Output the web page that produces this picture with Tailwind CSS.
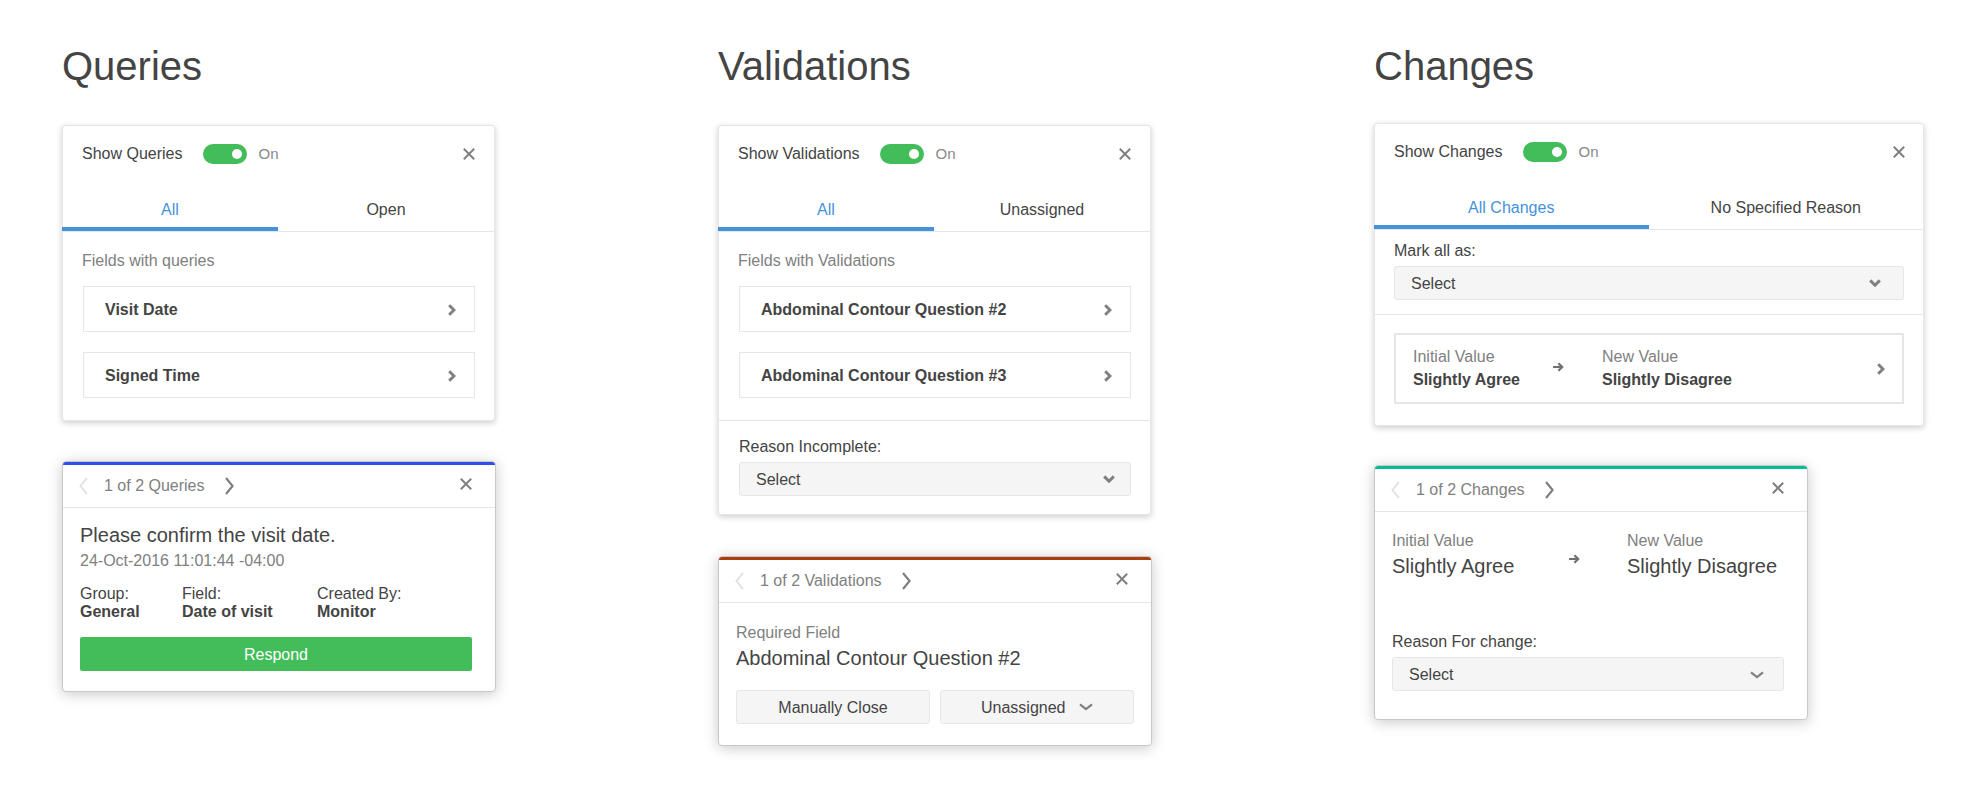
<!DOCTYPE html>
<html lang="en">
<head>
<meta charset="utf-8">
<title>Queries, Validations, Changes</title>
<script src="https://cdn.jsdelivr.net/npm/@tailwindcss/browser@4"></script>
</head>
<body class="bg-white font-['Liberation_Sans',Arial,sans-serif] text-base leading-6 text-[#444444]">
<svg class="hidden" aria-hidden="true">
  <symbol id="close" viewBox="0 0 12 12"><path d="M.8 .8 11.2 11.2M11.2 .8 .8 11.2" fill="none" stroke="currentColor" stroke-width="2" stroke-linecap="butt"/></symbol>
  <symbol id="next" viewBox="0 0 8 12"><path d="M1.2 1.2 6 6 1.2 10.8" fill="none" stroke="currentColor" stroke-width="3"/></symbol>
  <symbol id="down" viewBox="0 0 12 8"><path d="M1.2 1.4 6 6.2 10.8 1.4" fill="none" stroke="currentColor" stroke-width="3"/></symbol>
  <symbol id="down-thin" viewBox="0 0 14 8"><path d="M1 1.4 7 6.2 13 1.4" fill="none" stroke="currentColor" stroke-width="2.2"/></symbol>
  <symbol id="page-prev" viewBox="0 0 9 18"><path d="M8 1 1.4 9 8 17" fill="none" stroke="currentColor" stroke-width="2"/></symbol>
  <symbol id="page-next" viewBox="0 0 9 18"><path d="M1 1 7.6 9 1 17" fill="none" stroke="currentColor" stroke-width="2.2"/></symbol>
  <symbol id="arrow" viewBox="0 0 11 10"><path d="M0 5H9M5.4 1.2 9.2 5 5.4 8.8" fill="none" stroke="currentColor" stroke-width="2.2"/></symbol>
</svg>

<main class="grid grid-cols-3 gap-[106px] px-[62px] pt-[42px] pb-10">

  <section>
    <h2 class="text-[40px] leading-[48px]">Queries</h2>

    <div class="mt-[35px] w-full max-w-[433px] rounded-[3px] border border-[#e6e6e6] bg-white shadow-[0_2px_6px_rgba(0,0,0,0.2)]">
      <div class="flex h-[54px] items-center pt-px pr-[19px] pl-[19px]">
        <label for="show-queries">Show Queries</label>
        <input id="show-queries" type="checkbox" checked class="ml-5 flex h-5 w-11 appearance-none items-center justify-end rounded-full bg-[#43bd5a] pr-[5px] before:size-[10px] before:rounded-full before:bg-white before:content-['']">
        <span class="ml-3 text-[15px] text-[#888888]">On</span>
        <button class="ml-auto text-[#808080]" aria-label="Close"><svg class="size-3"><use href="#close"/></svg></button>
      </div>
      <div class="flex border-b border-[#e6e6e6]" role="tablist">
        <button role="tab" aria-selected="true" class="-ml-px flex h-[51px] flex-1 items-start justify-center border-b-4 border-[#4592db] pt-[18px] text-[#4592db]">All</button>
        <button role="tab" aria-selected="false" class="flex h-[51px] flex-1 items-start justify-center pt-[18px]">Open</button>
      </div>
      <div class="pt-[17px] pr-[19px] pb-[22px] pl-5">
        <h3 class="-ml-px text-[#808080]">Fields with queries</h3>
        <ul class="mt-[13px] flex flex-col gap-5">
          <li><button class="flex h-[46px] w-full items-center justify-between border border-[#e6e6e6] pt-px pr-[18px] pl-[21px] font-bold">Visit Date<svg class="h-3 w-2 text-[#808080]"><use href="#next"/></svg></button></li>
          <li><button class="flex h-[46px] w-full items-center justify-between border border-[#e6e6e6] pt-px pr-[18px] pl-[21px] font-bold">Signed Time<svg class="h-3 w-2 text-[#808080]"><use href="#next"/></svg></button></li>
        </ul>
      </div>
    </div>

    <div class="mt-10 w-full max-w-[434px] overflow-hidden rounded-[4px] border border-[#c8c8c8] bg-white shadow-[0_2px_14px_rgba(0,0,0,0.22)]">
      <div class="h-[3px] bg-[#2f4de8]"></div>
      <div class="flex h-[43px] items-center border-b border-[#e6e6e6] pr-[23px] pl-4 text-[#808080]">
        <button class="text-[#e4e4e4]" aria-label="Previous" disabled><svg class="h-[18px] w-[9px]"><use href="#page-prev"/></svg></button>
        <span class="mr-5 ml-4">1 of 2 Queries</span>
        <button aria-label="Next"><svg class="h-[18px] w-[9px]"><use href="#page-next"/></svg></button>
        <button class="mb-[5px] ml-auto" aria-label="Close"><svg class="size-3"><use href="#close"/></svg></button>
      </div>
      <div class="pt-[15px] pr-[23px] pb-5 pl-[17px]">
        <p class="text-xl leading-6">Please confirm the visit date.</p>
        <p class="mt-0.5 text-[#808080]">24-Oct-2016 11:01:44 -04:00</p>
        <dl class="mt-3 grid grid-cols-[102px_135px_1fr] leading-[18px]">
          <div><dt>Group:</dt><dd class="font-bold">General</dd></div>
          <div><dt>Field:</dt><dd class="font-bold">Date of visit</dd></div>
          <div><dt>Created By:</dt><dd class="font-bold">Monitor</dd></div>
        </dl>
        <button class="mt-4 h-[34px] w-full rounded-[2px] bg-[#43bd5a] pt-px text-white">Respond</button>
      </div>
    </div>
  </section>

  <section>
    <h2 class="text-[40px] leading-[48px]">Validations</h2>

    <div class="mt-[35px] w-full max-w-[433px] rounded-[3px] border border-[#e6e6e6] bg-white shadow-[0_2px_6px_rgba(0,0,0,0.2)]">
      <div class="flex h-[54px] items-center pt-px pr-[19px] pl-[19px]">
        <label for="show-validations">Show Validations</label>
        <input id="show-validations" type="checkbox" checked class="ml-5 flex h-5 w-11 appearance-none items-center justify-end rounded-full bg-[#43bd5a] pr-[5px] before:size-[10px] before:rounded-full before:bg-white before:content-['']">
        <span class="ml-3 text-[15px] text-[#888888]">On</span>
        <button class="ml-auto text-[#808080]" aria-label="Close"><svg class="size-3"><use href="#close"/></svg></button>
      </div>
      <div class="flex border-b border-[#e6e6e6]" role="tablist">
        <button role="tab" aria-selected="true" class="-ml-px flex h-[51px] flex-1 items-start justify-center border-b-4 border-[#4592db] pt-[18px] text-[#4592db]">All</button>
        <button role="tab" aria-selected="false" class="flex h-[51px] flex-1 items-start justify-center pt-[18px]">Unassigned</button>
      </div>
      <div class="border-b border-[#e6e6e6] pt-[17px] pr-[19px] pb-[22px] pl-5">
        <h3 class="-ml-px text-[#808080]">Fields with Validations</h3>
        <ul class="mt-[13px] flex flex-col gap-5">
          <li><button class="flex h-[46px] w-full items-center justify-between border border-[#e6e6e6] pt-px pr-[18px] pl-[21px] font-bold">Abdominal Contour Question #2<svg class="h-3 w-2 text-[#808080]"><use href="#next"/></svg></button></li>
          <li><button class="flex h-[46px] w-full items-center justify-between border border-[#e6e6e6] pt-px pr-[18px] pl-[21px] font-bold">Abdominal Contour Question #3<svg class="h-3 w-2 text-[#808080]"><use href="#next"/></svg></button></li>
        </ul>
      </div>
      <div class="pt-[14px] pr-[19px] pb-[18px] pl-5">
        <label for="incomplete" class="block">Reason Incomplete:</label>
        <div class="relative mt-[3px]">
          <select id="incomplete" class="block h-[34px] w-full appearance-none rounded-[3px] border border-[#e6e6e6] bg-[#f5f5f5] pt-px pl-4"><option>Select</option></select>
          <svg class="pointer-events-none absolute top-[13px] right-4 h-2 w-3 text-[#808080]"><use href="#down"/></svg>
        </div>
      </div>
    </div>

    <div class="mt-[41px] w-full max-w-[434px] overflow-hidden rounded-[4px] border border-[#c8c8c8] bg-white shadow-[0_2px_14px_rgba(0,0,0,0.22)]">
      <div class="h-[3px] bg-[#ae3d0c]"></div>
      <div class="flex h-[43px] items-center border-b border-[#e6e6e6] pr-[23px] pl-4 text-[#808080]">
        <button class="text-[#e4e4e4]" aria-label="Previous" disabled><svg class="h-[18px] w-[9px]"><use href="#page-prev"/></svg></button>
        <span class="mr-5 ml-4">1 of 2 Validations</span>
        <button aria-label="Next"><svg class="h-[18px] w-[9px]"><use href="#page-next"/></svg></button>
        <button class="mb-[5px] ml-auto" aria-label="Close"><svg class="size-3"><use href="#close"/></svg></button>
      </div>
      <div class="px-[17px] pt-[18px] pb-[21px]">
        <p class="text-[#808080]">Required Field</p>
        <p class="mt-px text-xl leading-6">Abdominal Contour Question #2</p>
        <div class="mt-5 grid grid-cols-2 gap-[10px]">
          <button class="h-[34px] rounded-[3px] border border-[#e6e6e6] bg-[#f5f5f5] pt-px">Manually Close</button>
          <div class="relative">
            <select aria-label="Assignment" class="block h-[34px] w-full appearance-none rounded-[3px] border border-[#e6e6e6] bg-[#f5f5f5] pt-px pl-10"><option>Unassigned</option></select>
            <svg class="pointer-events-none absolute top-[13px] right-[41px] h-2 w-[14px] text-[#808080]"><use href="#down-thin"/></svg>
          </div>
        </div>
      </div>
    </div>
  </section>

  <section>
    <h2 class="text-[40px] leading-[48px]">Changes</h2>

    <div class="mt-[33px] w-full rounded-[3px] border border-[#e6e6e6] bg-white shadow-[0_2px_6px_rgba(0,0,0,0.2)]">
      <div class="flex h-[54px] items-center pt-px pr-[18px] pl-[19px]">
        <label for="show-changes">Show Changes</label>
        <input id="show-changes" type="checkbox" checked class="ml-5 flex h-5 w-11 appearance-none items-center justify-end rounded-full bg-[#43bd5a] pr-[5px] before:size-[10px] before:rounded-full before:bg-white before:content-['']">
        <span class="ml-3 text-[15px] text-[#888888]">On</span>
        <button class="ml-auto text-[#808080]" aria-label="Close"><svg class="size-3"><use href="#close"/></svg></button>
      </div>
      <div class="flex border-b border-[#e6e6e6]" role="tablist">
        <button role="tab" aria-selected="true" class="-ml-px flex h-[51px] flex-1 items-start justify-center border-b-4 border-[#4592db] pt-[18px] text-[#4592db]">All Changes</button>
        <button role="tab" aria-selected="false" class="flex h-[51px] flex-1 items-start justify-center pt-[18px]">No Specified Reason</button>
      </div>
      <div class="border-b border-[#e6e6e6] px-[19px] pt-[9px] pb-[14px]">
        <label for="mark-all" class="block">Mark all as:</label>
        <div class="relative mt-[3px]">
          <select id="mark-all" class="block h-[34px] w-full appearance-none rounded-[3px] border border-[#e6e6e6] bg-[#f5f5f5] pt-px pl-4"><option>Select</option></select>
          <svg class="pointer-events-none absolute top-[13px] right-[23px] h-2 w-3 text-[#808080]"><use href="#down"/></svg>
        </div>
      </div>
      <div class="px-[19px] pt-[18px] pb-[21px]">
        <button class="flex h-[71px] w-full items-center border-2 border-[#e6e6e6] px-[17px] text-left">
          <span class="flex w-[140px] flex-col pb-0.5 leading-[23px]"><span class="text-[#808080]">Initial Value</span><b>Slightly Agree</b></span>
          <svg class="mb-1 h-[10px] w-[11px] text-[#707070]"><use href="#arrow"/></svg>
          <span class="ml-[38px] flex flex-col pb-0.5 leading-[23px]"><span class="text-[#808080]">New Value</span><b>Slightly Disagree</b></span>
          <svg class="ml-auto h-3 w-2 text-[#808080]"><use href="#next"/></svg>
        </button>
      </div>
    </div>

    <div class="mt-[39px] w-full max-w-[434px] overflow-hidden rounded-[4px] border border-[#c8c8c8] bg-white shadow-[0_2px_14px_rgba(0,0,0,0.22)]">
      <div class="h-[3px] bg-[#03bd98]"></div>
      <div class="flex h-[43px] items-center border-b border-[#e6e6e6] pr-[23px] pl-4 text-[#808080]">
        <button class="text-[#e4e4e4]" aria-label="Previous" disabled><svg class="h-[18px] w-[9px]"><use href="#page-prev"/></svg></button>
        <span class="mr-5 ml-4">1 of 2 Changes</span>
        <button aria-label="Next"><svg class="h-[18px] w-[9px]"><use href="#page-next"/></svg></button>
        <button class="mb-[5px] ml-auto" aria-label="Close"><svg class="size-3"><use href="#close"/></svg></button>
      </div>
      <div class="pt-[17px] pr-[23px] pb-7 pl-[17px]">
        <div class="flex items-center">
          <div class="w-[177px]"><p class="text-[#808080]">Initial Value</p><p class="mt-px text-xl leading-6">Slightly Agree</p></div>
          <svg class="mt-[10px] h-[10px] w-[11px] text-[#707070]"><use href="#arrow"/></svg>
          <div class="ml-[47px]"><p class="text-[#808080]">New Value</p><p class="mt-px text-xl leading-6">Slightly Disagree</p></div>
        </div>
        <label for="reason" class="mt-[52px] block">Reason For change:</label>
        <div class="relative mt-[3px]">
          <select id="reason" class="block h-[34px] w-full appearance-none rounded-[3px] border border-[#e6e6e6] bg-[#f5f5f5] pt-px pl-4"><option>Select</option></select>
          <svg class="pointer-events-none absolute top-[14px] right-5 h-2 w-[14px] text-[#808080]"><use href="#down-thin"/></svg>
        </div>
      </div>
    </div>
  </section>
</main>
</body>
</html>
